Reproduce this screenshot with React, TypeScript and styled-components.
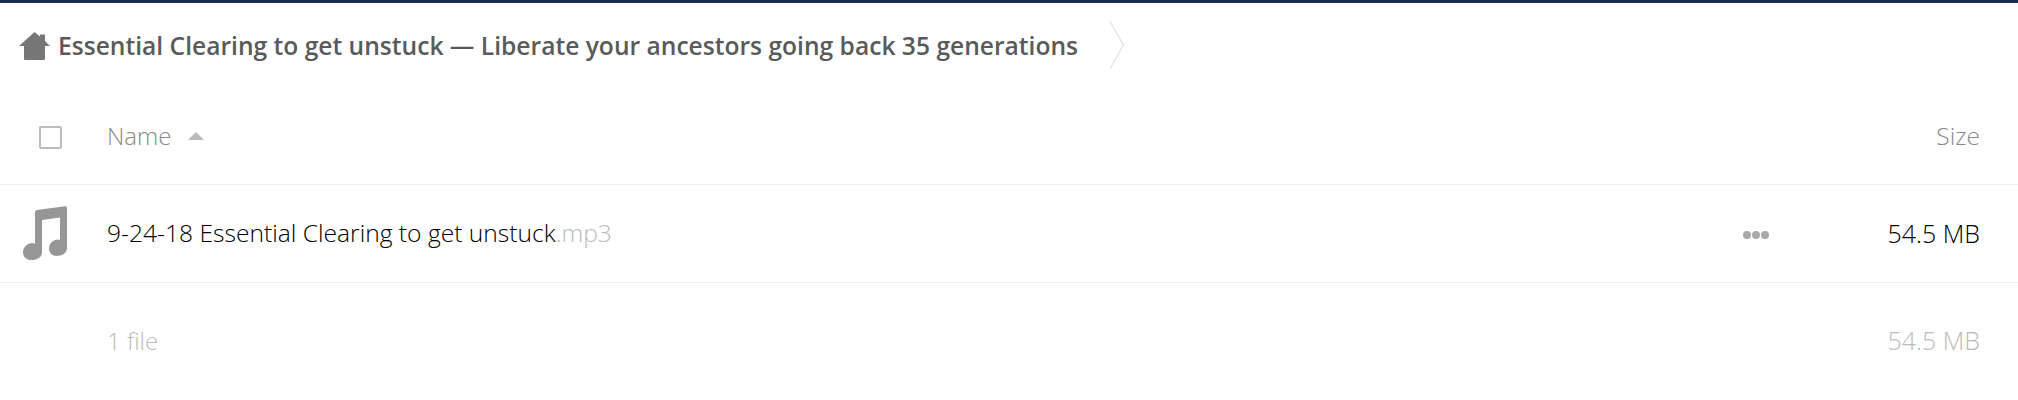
import styled, { createGlobalStyle } from "styled-components"

const GlobalStyle = createGlobalStyle`
  html, body {
    margin: 0;
    padding: 0;
    background: #fff;
    font-family: "Open Sans", "Liberation Sans", sans-serif;
  }
`

const HomeIcon = () => (
  <svg width="31" height="28" viewBox="0 0 31 28" fill="#777">
    <path d="M15.5 0 L21 4.6 L21 2.6 L26 2.6 L26 9 L31 14 L26 14 L26 27 Q26 28 25 28 L6 28 Q5 28 5 27 L5 14 L0 14 Z" />
  </svg>
)

const MusicIcon = () => (
  <svg width="44" height="54" viewBox="0 0 44 54" fill="#969696">
    <path d="M12 6 Q12 4.500 14 4 L42 0.300 Q44 0 44 2.500 L44 42 C44 47 39 50 33.500 50 C29 50 26 46.500 26 42.500 C26 37.500 30 33.500 35 33.500 Q36.500 33.500 37 34 L37 11.500 L19 14 L19 46.500 C19 51 14.500 54 9 54 C4 54 0 51.500 0 46 C0 41 4.500 37 9.500 37 Q11 37 12 38 Z" />
  </svg>
)

const App = () => (
  <Page>
    <GlobalStyle />
    <Breadcrumb>
      <HomeLink><HomeIcon /></HomeLink>
      <Crumb>Essential Clearing to get unstuck — Liberate your ancestors going back 35 generations</Crumb>
      <Chevron width="16" height="48" viewBox="0 0 16 48">
        <path d="M1 0.500 L14.500 24 L1 47.500" />
      </Chevron>
    </Breadcrumb>
    <HeaderRow>
      <SelectCell><Checkbox /></SelectCell>
      <NameHeader>
        Name
        <SortArrow />
      </NameHeader>
      <SizeHeader>Size</SizeHeader>
    </HeaderRow>
    <FileRow>
      <IconCell><MusicIcon /></IconCell>
      <FileName>
        9-24-18 Essential Clearing to get unstuck<Extension>.mp3</Extension>
      </FileName>
      <Actions>
        <Dot />
        <Dot />
        <Dot />
      </Actions>
      <FileSize>54.5 MB</FileSize>
    </FileRow>
    <SummaryRow>
      <SummaryLabel>1 file</SummaryLabel>
      <SummarySize>54.5 MB</SummarySize>
    </SummaryRow>
  </Page>
)

export default App

const Page = styled.div`
    width: 2018px;
    height: 400px;
    overflow: hidden;
    box-sizing: border-box;
    border-top: 3px solid #1c2e4a;
    background: #fff;
`

const Breadcrumb = styled.div`
    display: flex;
    align-items: center;
    height: 86px;
    padding-left: 19px;
`

const HomeLink = styled.div`
    display: flex;
    width: 39px;
    margin-top: -1px;
`

const Crumb = styled.span`
    font-size: 24.6px;
    font-weight: 600;
    color: #5a5a5a;
    white-space: nowrap;
    margin-top: -1px;
`

const Chevron = styled.svg`
    margin-left: 31px;
    margin-top: -2px;
    fill: none;
    stroke: #d8d8d8;
    stroke-width: 1;
`

const HeaderRow = styled.div`
    display: flex;
    align-items: center;
    height: 96px;
    box-sizing: border-box;
    border-bottom: 1px solid #eee;
    padding-right: 38px;
    padding-bottom: 2px;
`

const SelectCell = styled.div`
    display: flex;
    justify-content: center;
    width: 107px;
    padding-right: 6px;
    padding-top: 4px;
    box-sizing: border-box;
`

const Checkbox = styled.div`
    width: 23px;
    height: 23px;
    box-sizing: border-box;
    border: 2px solid #bbb;
    border-radius: 2px;
`

const NameHeader = styled.div`
    display: flex;
    align-items: center;
    flex: 1;
    font-size: 24px;
    font-weight: 300;
    color: #888;
`

const SortArrow = styled.span`
    width: 0;
    height: 0;
    margin-left: 17px;
    border-left: 8px solid transparent;
    border-right: 8px solid transparent;
    border-bottom: 8px solid #bbb;
`

const SizeHeader = styled.div`
    font-size: 24.5px;
    font-weight: 300;
    color: #888;
`

const FileRow = styled.div`
    display: flex;
    align-items: center;
    height: 98px;
    box-sizing: border-box;
    border-bottom: 1px solid #eee;
    padding-right: 38px;
    padding-bottom: 2px;
`

const IconCell = styled.div`
    display: flex;
    width: 107px;
    padding-left: 23px;
    padding-top: 1px;
    box-sizing: border-box;
`

const FileName = styled.div`
    flex: 1;
    font-size: 24.6px;
    font-weight: 300;
    color: #000;
    white-space: nowrap;
`

const Extension = styled.span`
    color: #bbb;
`

const Actions = styled.div`
    display: flex;
    gap: 1px;
    margin-right: 118px;
    margin-top: 4px;
`

const Dot = styled.span`
    width: 8px;
    height: 8px;
    border-radius: 50%;
    background: #aaa;
`

const FileSize = styled.div`
    font-size: 25px;
    font-weight: 300;
    color: #000;
`

const SummaryRow = styled.div`
    display: flex;
    align-items: center;
    justify-content: space-between;
    height: 114px;
    padding: 0 38px 0 107px;
    font-size: 24px;
    font-weight: 300;
    color: #bbb;
`

const SummaryLabel = styled.span``

const SummarySize = styled.span`
    font-size: 25px;
`
